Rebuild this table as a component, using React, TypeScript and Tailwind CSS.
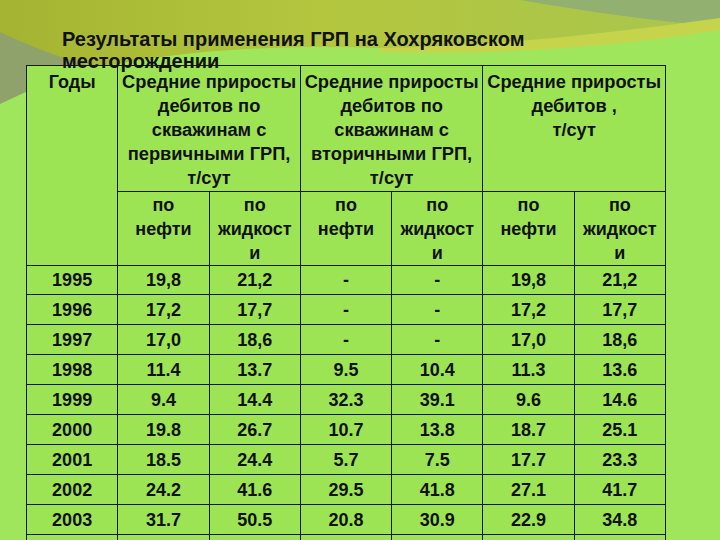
import React from 'react';

const rows: string[][] = [
  ['1995', '19,8', '21,2', '-', '-', '19,8', '21,2'],
  ['1996', '17,2', '17,7', '-', '-', '17,2', '17,7'],
  ['1997', '17,0', '18,6', '-', '-', '17,0', '18,6'],
  ['1998', '11.4', '13.7', '9.5', '10.4', '11.3', '13.6'],
  ['1999', '9.4', '14.4', '32.3', '39.1', '9.6', '14.6'],
  ['2000', '19.8', '26.7', '10.7', '13.8', '18.7', '25.1'],
  ['2001', '18.5', '24.4', '5.7', '7.5', '17.7', '23.3'],
  ['2002', '24.2', '41.6', '29.5', '41.8', '27.1', '41.7'],
  ['2003', '31.7', '50.5', '20.8', '30.9', '22.9', '34.8'],
];

const groups: string[][] = [
  ['Средние приросты', 'дебитов по', 'скважинам с', 'первичными ГРП,', 'т/сут'],
  ['Средние приросты', 'дебитов по', 'скважинам с', 'вторичными ГРП,', 'т/сут'],
  ['Средние приросты', 'дебитов ,', 'т/сут'],
];

const cell = 'border border-[#141a0c] text-center align-top';

const Backdrop = () => (
  <svg className="absolute inset-0" width="720" height="540" viewBox="0 0 720 540">
    <defs>
      <linearGradient id="olive" x1="0" y1="0" x2="1" y2="0">
        <stop offset="0" stopColor="#a4b432" />
        <stop offset="0.45" stopColor="#b4c63e" />
        <stop offset="1" stopColor="#a8c64e" />
      </linearGradient>
    </defs>
    <rect width="720" height="540" fill="#a0e65c" />
    <path d="M0 0 H720 V22 C610 40 500 50 380 48 C250 44 120 52 0 96 Z" fill="url(#olive)" />
    <path d="M0 32 C30 46 60 58 86 64 L0 104 Z" fill="#90a26c" />
    <path d="M520 0 H720 V26 C660 22 590 12 520 0 Z" fill="#92b070" />
    <path d="M380 48 C500 46 620 32 720 18 V30 C620 46 500 56 380 52 Z" fill="#c6d44c" />
  </svg>
);

export default function App() {
  return (
    <div className="relative h-[540px] w-[720px] overflow-hidden font-['Liberation_Sans',Arial,sans-serif] text-[#111]">
      <Backdrop />
      <div className="relative">
        <h1 className="relative z-10 pl-[62px] pt-[28px] text-[20px] font-bold leading-[22px]">
          Результаты применения ГРП на Хохряковском
          <br />
          месторождении
        </h1>
        <table className="ml-[26px] mt-[-7px] w-[640px] table-fixed border-collapse bg-[#9de454] text-[18px] font-bold leading-[24px]">
          <tbody>
            <tr className="h-[126px]">
              <td rowSpan={2} className={`${cell} pt-[4px]`}>
                Годы
              </td>
              {groups.map((g, i) => (
                <td key={i} colSpan={2} className={`${cell} pt-[4px] text-[18.3px]`}>
                  {g.map((line, j) => (
                    <div key={j}>{line}</div>
                  ))}
                </td>
              ))}
            </tr>
            <tr className="h-[74px]">
              {[0, 1, 2].map((i) => (
                <React.Fragment key={i}>
                  <td className={`${cell} pt-[1px]`}>
                    <div>по</div>
                    <div>нефти</div>
                  </td>
                  <td className={`${cell} pt-[1px]`}>
                    <div>по</div>
                    <div>жидкост</div>
                    <div>и</div>
                  </td>
                </React.Fragment>
              ))}
            </tr>
            {rows.map((r, i) => (
              <tr key={i} className={i === 0 ? 'h-[29px]' : 'h-[30px]'}>
                {r.map((v, j) => (
                  <td key={j} className="border border-[#141a0c] text-center align-middle">
                    {v}
                  </td>
                ))}
              </tr>
            ))}
            <tr className="h-[30px]">
              {[0, 1, 2, 3, 4, 5, 6].map((j) => (
                <td key={j} className="border border-[#141a0c]"></td>
              ))}
            </tr>
          </tbody>
        </table>
      </div>
    </div>
  );
}
